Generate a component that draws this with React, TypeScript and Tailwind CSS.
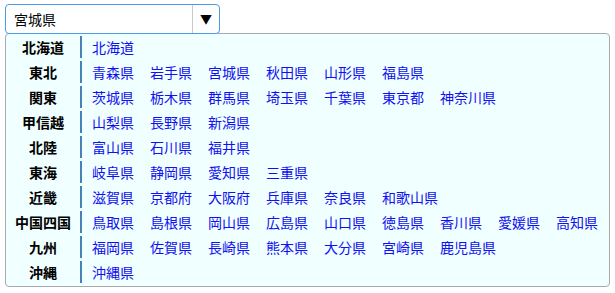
import React from "react";

const data: [string, string[]][] = [
  ["北海道", ["北海道"]],
  ["東北", ["青森県", "岩手県", "宮城県", "秋田県", "山形県", "福島県"]],
  ["関東", ["茨城県", "栃木県", "群馬県", "埼玉県", "千葉県", "東京都", "神奈川県"]],
  ["甲信越", ["山梨県", "長野県", "新潟県"]],
  ["北陸", ["富山県", "石川県", "福井県"]],
  ["東海", ["岐阜県", "静岡県", "愛知県", "三重県"]],
  ["近畿", ["滋賀県", "京都府", "大阪府", "兵庫県", "奈良県", "和歌山県"]],
  ["中国四国", ["鳥取県", "島根県", "岡山県", "広島県", "山口県", "徳島県", "香川県", "愛媛県", "高知県"]],
  ["九州", ["福岡県", "佐賀県", "長崎県", "熊本県", "大分県", "宮崎県", "鹿児島県"]],
  ["沖縄", ["沖縄県"]],
];

export default function App() {
  return (
    <div
      className="w-[615px] h-[293px] bg-white relative"
      style={{ fontFamily: '"Noto Sans CJK JP", "Noto Sans", sans-serif' }}
    >
      <div className="pt-[4px] pl-[5px]">
        <div className="relative z-10 flex w-[215px] h-[30px] border border-[#4a9be8] rounded-[4px] bg-white">
          <div className="flex-1 flex items-center pl-[8px] text-[14px] text-black">宮城県</div>
          <div className="w-[27px] border-l border-[#c8c8c8] flex items-center justify-center text-[12px] text-black">▼</div>
        </div>
        <div className="w-[605px] -mt-[1px] h-[254px] border border-[#aaaaaa] rounded-[4px] bg-[#f0ffff] pt-[2px] flex flex-col gap-[3px]">
          {data.map(([region, prefs]) => (
            <div key={region} className="flex h-[22px] items-center">
              <div className="w-[76px] h-full border-r-2 border-[#4682b4] flex items-center justify-center text-[14px] font-bold text-black">
                {region}
              </div>
              <div className="flex pl-[10px] gap-[16px]">
                {prefs.map((p) => (
                  <span key={p} className="text-[14px] text-[#1010f0]">
                    {p}
                  </span>
                ))}
              </div>
            </div>
          ))}
        </div>
      </div>
    </div>
  );
}
